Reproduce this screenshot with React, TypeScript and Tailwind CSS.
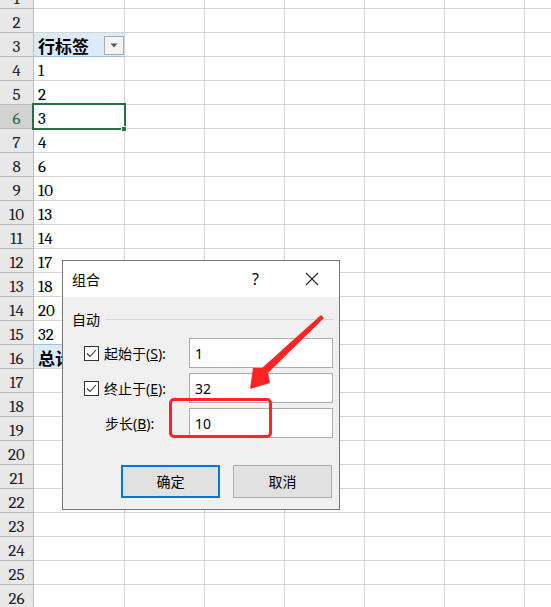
import React from "react";

// Pivot row labels in column A, keyed by sheet row number.
const COL_A: Record<number, { text: string; kind?: "head" | "total" }> = {
  3: { text: "行标签", kind: "head" },
  4: { text: "1" },
  5: { text: "2" },
  6: { text: "3" },
  7: { text: "4" },
  8: { text: "6" },
  9: { text: "10" },
  10: { text: "13" },
  11: { text: "14" },
  12: { text: "17" },
  13: { text: "18" },
  14: { text: "20" },
  15: { text: "32" },
  16: { text: "总计", kind: "total" },
};

const SELECTED_ROW = 6;

function FilterButton() {
  return (
    <span className="ml-auto mb-[1px] flex h-[19px] w-[20px] shrink-0 items-center justify-center border border-[#ababab] bg-[#f4f4f4]">
      <svg width="8" height="5" viewBox="0 0 8 5">
        <path d="M0.5 0.5 L7.5 0.5 L4 4.5 Z" fill="#5a5a5a" />
      </svg>
    </span>
  );
}

function SheetRow({ n }: { n: number }) {
  const cell = COL_A[n];
  const selected = n === SELECTED_ROW;
  const pivotHead = cell?.kind === "head" || cell?.kind === "total";
  const blueEdge = n === 3 || n === 15;
  return (
    <div className="flex h-[24px] shrink-0">
      <div
        className={`flex w-[34px] shrink-0 items-end justify-center border-b border-r border-[#bcbcbc] font-serif text-[17px] leading-[18px] ${
          selected ? "bg-[#d2d2d2] text-[#217346]" : "bg-[#e8e8e8] text-[#222]"
        }`}
      >
        {n}
      </div>
      <div
        className={`flex w-[91px] shrink-0 items-end border-b border-r pl-[4px] font-serif text-[17px] leading-[18px] text-black ${
          blueEdge ? "border-b-[#9bc2e6] border-r-[#d4d4d4]" : "border-[#d4d4d4]"
        } ${pivotHead ? "bg-[#ddebf7] font-bold" : ""}`}
      >
        {cell && (
          <span className={pivotHead ? "font-['Noto_Sans_CJK_SC',sans-serif] text-[17px] leading-[20px]" : ""}>
            {cell.text}
          </span>
        )}
        {cell?.kind === "head" && <FilterButton />}
      </div>
      {[0, 1, 2, 3, 4, 5].map((i) => (
        <div key={i} className="w-[80px] shrink-0 border-b border-r border-[#d4d4d4]" />
      ))}
    </div>
  );
}

function CheckBox() {
  return (
    <span className="flex h-[15px] w-[15px] shrink-0 items-center justify-center border border-[#333] bg-white">
      <svg width="11" height="9" viewBox="0 0 11 9">
        <polyline points="1,4.5 4,7.5 10,1" fill="none" stroke="#333" strokeWidth="1.1" />
      </svg>
    </span>
  );
}

function Field({ value }: { value: string }) {
  return (
    <div className="ml-auto flex h-[30px] w-[144px] shrink-0 items-center border border-[#adadad] bg-white pl-[5px] text-[14px] text-black">
      {value}
    </div>
  );
}

function GroupDialog() {
  return (
    <div className="absolute left-[62px] top-[260px] flex h-[250px] w-[278px] flex-col border border-[#777] bg-[#f0f0f0] font-['Noto_Sans','Noto_Sans_CJK_SC',sans-serif] text-[14px] text-black">
      <div className="flex h-[36px] shrink-0 items-center bg-white pl-[9px] pr-[20px]">
        <span>组合</span>
        <span className="ml-auto text-[16px]">?</span>
        <svg className="ml-[46px]" width="14" height="14" viewBox="0 0 14 14">
          <path d="M1 1 L13 13 M13 1 L1 13" stroke="#222" strokeWidth="1.1" />
        </svg>
      </div>

      <div className="flex flex-1 flex-col pl-[9px] pr-[6px]">
        <div className="mt-[12px] flex h-[20px] items-center">
          <span>自动</span>
          <span className="ml-[6px] h-px flex-1 bg-[#d5d5d5]" />
        </div>

        <div className="mt-[9px] flex flex-col gap-[5px]">
          <div className="flex h-[30px] items-center pl-[12px]">
            <CheckBox />
            <span className="ml-[5px]">
              起始于(<span className="underline">S</span>):
            </span>
            <Field value="1" />
          </div>
          <div className="flex h-[30px] items-center pl-[12px]">
            <CheckBox />
            <span className="ml-[5px]">
              终止于(<span className="underline">E</span>):
            </span>
            <Field value="32" />
          </div>
          <div className="flex h-[30px] items-center pl-[33px]">
            <span>
              步长(<span className="underline">B</span>):
            </span>
            <Field value="10" />
          </div>
        </div>

        <div className="mt-[27px] flex justify-end gap-[13px] pr-[1px]">
          <button className="flex h-[33px] w-[99px] items-center justify-center border-2 border-[#0078d7] bg-[#e1e1e1]">确定</button>
          <button className="flex h-[33px] w-[99px] items-center justify-center border border-[#adadad] bg-[#e1e1e1]">取消</button>
        </div>
      </div>
    </div>
  );
}

export default function App() {
  const rows = Array.from({ length: 26 }, (_, i) => i + 1);
  return (
    <div className="relative h-[607px] w-[551px] overflow-hidden bg-white">
      <div className="-mt-[15px] flex flex-col">
        {rows.map((n) => (
          <SheetRow key={n} n={n} />
        ))}
      </div>

      {/* active cell A6 */}
      <div className="absolute left-[32px] top-[103px] h-[27px] w-[94px] border-2 border-[#217346]" />
      <div className="absolute left-[121px] top-[126px] h-[6px] w-[6px] border border-white bg-[#217346]" />

      <GroupDialog />

      {/* annotation: box around step field and pointer arrow */}
      <div className="absolute left-[169px] top-[398px] h-[40px] w-[103px] rounded-[5px] border-[3px] border-[#ff2424]" />
      <svg className="absolute left-0 top-0" width="551" height="607" viewBox="0 0 551 607">
        <polygon points="321,315 324,318 268,373 270,383 250,389 253,368 262,368" fill="#ff2424" />
      </svg>
    </div>
  );
}
